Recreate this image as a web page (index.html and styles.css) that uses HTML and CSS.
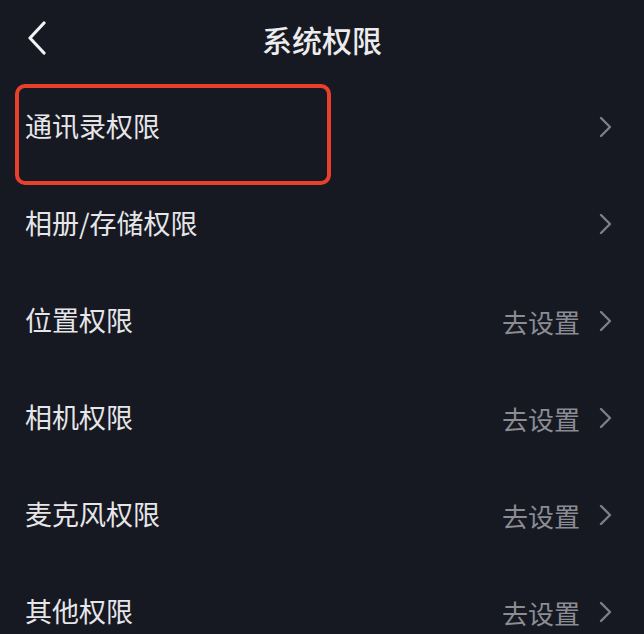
FILE: index.html
```html
<!DOCTYPE html>
<html lang="zh-CN">
<head>
<meta charset="utf-8">
<title>系统权限</title>
<link rel="stylesheet" href="styles.css">
</head>
<body>
<div class="page">
  <header class="nav">
    <svg class="back" width="20" height="34" viewBox="0 0 20 34"><path d="M17 2 L3 17 L17 32" fill="none" stroke="#f2f2f4" stroke-width="3.2" stroke-linecap="round" stroke-linejoin="round"/></svg>
    <h1 class="title">系统权限</h1>
  </header>
  <ul class="list">
    <li class="row highlighted"><span class="label">通讯录权限</span><span class="right"><svg class="chev" width="14" height="22" viewBox="0 0 14 22"><path d="M2 2 L11 11 L2 20" fill="none" stroke="#7d7e88" stroke-width="2.4" stroke-linecap="round" stroke-linejoin="round"/></svg></span></li>
    <li class="row"><span class="label">相册/存储权限</span><span class="right"><svg class="chev" width="14" height="22" viewBox="0 0 14 22"><path d="M2 2 L11 11 L2 20" fill="none" stroke="#7d7e88" stroke-width="2.4" stroke-linecap="round" stroke-linejoin="round"/></svg></span></li>
    <li class="row"><span class="label">位置权限</span><span class="right"><span class="hint">去设置</span><svg class="chev" width="14" height="22" viewBox="0 0 14 22"><path d="M2 2 L11 11 L2 20" fill="none" stroke="#7d7e88" stroke-width="2.4" stroke-linecap="round" stroke-linejoin="round"/></svg></span></li>
    <li class="row"><span class="label">相机权限</span><span class="right"><span class="hint">去设置</span><svg class="chev" width="14" height="22" viewBox="0 0 14 22"><path d="M2 2 L11 11 L2 20" fill="none" stroke="#7d7e88" stroke-width="2.4" stroke-linecap="round" stroke-linejoin="round"/></svg></span></li>
    <li class="row"><span class="label">麦克风权限</span><span class="right"><span class="hint">去设置</span><svg class="chev" width="14" height="22" viewBox="0 0 14 22"><path d="M2 2 L11 11 L2 20" fill="none" stroke="#7d7e88" stroke-width="2.4" stroke-linecap="round" stroke-linejoin="round"/></svg></span></li>
    <li class="row"><span class="label">其他权限</span><span class="right"><span class="hint">去设置</span><svg class="chev" width="14" height="22" viewBox="0 0 14 22"><path d="M2 2 L11 11 L2 20" fill="none" stroke="#7d7e88" stroke-width="2.4" stroke-linecap="round" stroke-linejoin="round"/></svg></span></li>
  </ul>
</div>
</body>
</html>
```

FILE: styles.css
```css
html, body {
  margin: 0;
  padding: 0;
  background: #161922;
  height: 100%;
  overflow: hidden;
}
body {
  font-family: "Noto Sans CJK SC", "Noto Sans", sans-serif;
  color: #e8e8ea;
}
.page {
  width: 644px;
  height: 634px;
  overflow: hidden;
}
.nav {
  position: relative;
  height: 79px;
  display: flex;
  align-items: center;
  justify-content: center;
}
.back {
  position: absolute;
  left: 27px;
  top: 21px;
}
.title {
  margin: 0;
  margin-top: -2px;
  font-size: 30px;
  font-weight: 500;
  color: #ececee;
  line-height: 1;
}
.list {
  list-style: none;
  margin: 0;
  padding: 0;
}
.row {
  position: relative;
  height: 97px;
  display: flex;
  align-items: center;
  justify-content: space-between;
  padding: 0 31px 0 25px;
}
.label {
  font-size: 27px;
  line-height: 1;
  color: #e6e6e9;
  margin-top: -5px;
}
.right {
  display: flex;
  align-items: center;
  gap: 19px;
}
.hint {
  font-size: 26px;
  line-height: 1;
  color: #8b8c94;
  margin-top: 0;
}
.chev {
  display: block;
  margin-top: -1px;
}
.highlighted::after {
  content: "";
  position: absolute;
  left: 15px;
  top: 5px;
  width: 308px;
  height: 93px;
  border: 4px solid #e9402b;
  border-radius: 10px;
}
```
